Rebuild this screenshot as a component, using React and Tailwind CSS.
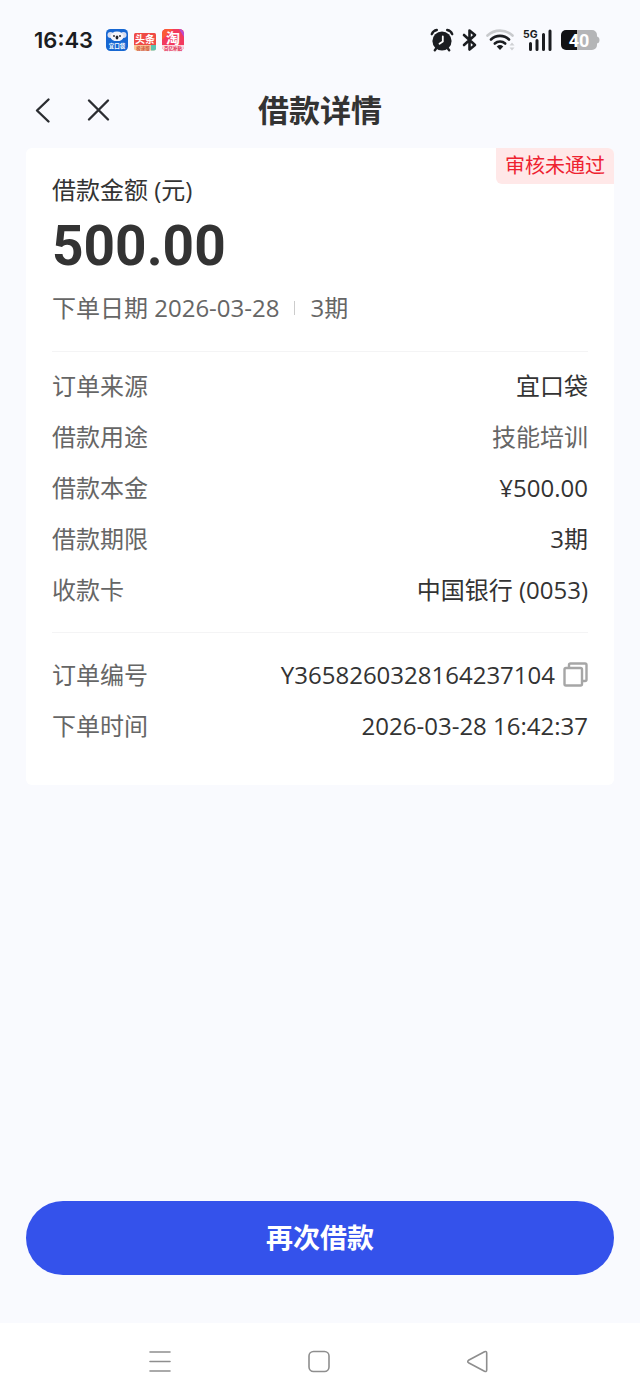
import React from 'react';

const basicRows = [
  { label: '订单来源', value: '宜口袋' },
  { label: '借款用途', value: '技能培训', muted: true },
  { label: '借款本金', value: '¥500.00' },
  { label: '借款期限', value: '3期' },
  { label: '收款卡', value: '中国银行 (0053)' }
];

const orderRows = [
  { label: '订单编号', value: 'Y3658260328164237104', copyable: true },
  { label: '下单时间', value: '2026-03-28 16:42:37' }
];

const AppBadges = () => (
  <div className="flex items-center gap-1.5" aria-hidden="true">
    {/* Yikoudai */}
    <svg width="22" height="22" viewBox="0 0 22 22">
      <rect width="22" height="22" rx="4.5" fill="#1767d2" />
      <circle cx="4.5" cy="6" r="3" fill="#d9def0" />
      <circle cx="17.5" cy="6" r="3" fill="#d9def0" />
      <ellipse cx="11" cy="7.5" rx="6.5" ry="5" fill="#f4f5fb" />
      <ellipse cx="11" cy="8.5" rx="1.4" ry="2" fill="#20232b" />
      <circle cx="8" cy="7" r="0.9" fill="#20232b" />
      <circle cx="14" cy="7" r="0.9" fill="#20232b" />
      <path d="M3 12h16v8H3z" fill="#1767d2" />
      <text x="11" y="18.5" textAnchor="middle" fontSize="5.5" fontWeight="700" fill="#fff">宜口袋</text>
    </svg>
    {/* Toutiao */}
    <svg width="22" height="22" viewBox="0 0 22 22">
      <rect y="4" width="22" height="13" rx="1.5" fill="#ef4a45" />
      <path d="M0 16h22v3.5a2 2 0 0 1-2 2H2a2 2 0 0 1-2-2z" fill="#f9c69a" />
      <path d="M17 16h5v3.5a2 2 0 0 1-2 2h-3z" fill="#5cc3b0" />
      <text x="11" y="14" textAnchor="middle" fontSize="10" fontWeight="700" fill="#fff">头条</text>
      <text x="9" y="20.5" textAnchor="middle" fontSize="4.5" fontWeight="700" fill="#d0583a">极速版</text>
    </svg>
    {/* Taobao */}
    <svg width="22" height="22" viewBox="0 0 22 22" overflow="visible">
      <rect width="22" height="22" rx="4.5" fill="#f23a5e" />
      <path d="M0 11V4.5A4.5 4.5 0 0 1 4.5 0H11z" fill="#fb5a36" />
      <path d="M17 0a5 5 0 0 1 5 5v3z" fill="#b84bd0" />
      <path d="M0 16h22v1.5a4.5 4.5 0 0 1-4.5 4.5h-13A4.5 4.5 0 0 1 0 17.5z" fill="#fbd9e0" />
      <text x="11" y="14" textAnchor="middle" fontSize="14" fontWeight="700" fill="#fff">淘</text>
      <text x="11" y="20.5" textAnchor="middle" fontSize="4.5" fontWeight="700" fill="#e02850">百亿补贴</text>
    </svg>
  </div>
);

const AlarmIcon = () => (
  <svg width="24" height="24" viewBox="0 0 24 24" aria-hidden="true">
    <circle cx="12" cy="13" r="9.6" fill="#1b1d21" />
    <path d="M1.8 6.2A6.5 6.5 0 0 1 6.8 2M17.2 2a6.5 6.5 0 0 1 5 4.2" fill="none" stroke="#1b1d21" strokeWidth="2.4" strokeLinecap="round" />
    <path d="M6.5 20l-1.7 2.2M17.5 20l1.7 2.2" stroke="#1b1d21" strokeWidth="2.4" strokeLinecap="round" />
    <path d="M12.8 8.5v5l-3.3 2.3" fill="none" stroke="#fff" strokeWidth="1.8" strokeLinecap="round" />
  </svg>
);

const BluetoothIcon = () => (
  <svg width="16" height="24" viewBox="0 0 16 24" aria-hidden="true">
    <path d="M2 7l11 10-5.500 4.500v-19L13 7 2 17" fill="none" stroke="#1b1d21" strokeWidth="2.6" strokeLinejoin="round" strokeLinecap="round" />
  </svg>
);

const WifiIcon = () => (
  <svg width="29" height="24" viewBox="0 0 29 24" aria-hidden="true">
    <g fill="none" strokeWidth="2.6" strokeLinecap="round">
      <path d="M1.5 7.5a18.5 18.5 0 0 1 25 0" stroke="#c8cacd" />
      <path d="M5 11.5a13 13 0 0 1 18 0" stroke="#1b1d21" />
      <path d="M8.8 15.5a7.6 7.6 0 0 1 10.4 0" stroke="#1b1d21" />
    </g>
    <path d="M14 22l-3.300-3.500a5 5 0 0 1 6.600 0z" fill="#1b1d21" />
    <path d="M23.5 17.5l2.5-3 2.5 3zM23.5 19.5l2.5 3 2.5-3z" fill="#cfd1d4" />
  </svg>
);

const SignalIcon = () => (
  <svg width="30" height="24" viewBox="0 0 30 24" aria-hidden="true">
    <text x="0" y="9.5" fontFamily="Inter, sans-serif" fontSize="10.5" fontWeight="700" fill="#1b1d21">5G</text>
    <path d="M7.5 21.5v-6M14 21.5v-9M20.5 21.5v-15M27 21.5V3" stroke="#1b1d21" strokeWidth="3" strokeLinecap="round" />
  </svg>
);

const BatteryIcon = () => (
  <svg width="39" height="22" viewBox="0 0 39 22" role="img" aria-label="40%">
    <path d="M5 1h11v20H5a5 5 0 0 1-5-5V6a5 5 0 0 1 5-5z" fill="#111214" />
    <path d="M16 1h15a5 5 0 0 1 5 5v1.5q2.5.5 2.5 3.5T36 14.5V16a5 5 0 0 1-5 5H16z" fill="#b4b5b7" />
    <text x="18" y="17.5" textAnchor="middle" fontFamily="Roboto, sans-serif" fontSize="18" fontWeight="700" fill="#fff">40</text>
  </svg>
);

const StatusBar = () => (
  <div className="flex h-20 items-center justify-between pl-[34px] pr-10">
    <div className="flex items-center gap-[13px]">
      <span className="font-[Inter] text-[22px] font-semibold text-[#1b1d21]">16:43</span>
      <AppBadges />
    </div>
    <div className="flex items-center gap-2">
      <AlarmIcon />
      <BluetoothIcon />
      <WifiIcon />
      <SignalIcon />
      <BatteryIcon />
    </div>
  </div>
);

const TitleBar = () => (
  <header className="grid h-[60px] grid-cols-[1fr_auto_1fr] items-center px-[30px]">
    <div className="flex items-center gap-7">
      <button type="button" aria-label="返回">
        <svg width="26" height="28" viewBox="0 0 26 28" fill="none" stroke="#2b2d31" strokeWidth="2.4" strokeLinecap="round" strokeLinejoin="round">
          <path d="M18.5 3.5L7 14.5l11.5 11" />
        </svg>
      </button>
      <button type="button" aria-label="关闭">
        <svg width="28" height="28" viewBox="0 0 28 28" fill="none" stroke="#2b2d31" strokeWidth="2.4" strokeLinecap="round">
          <path d="M5 4.5l19 19M24 4.5l-19 19" />
        </svg>
      </button>
    </div>
    <h1 className="text-[31px] font-bold text-[#333]">借款详情</h1>
  </header>
);

const CopyIcon = () => (
  <svg width="25" height="25" viewBox="0 0 25 25" fill="none" stroke="#a6a6a6" strokeWidth="2.4" strokeLinejoin="round">
    <rect x="1.5" y="6" width="17.5" height="17.5" rx="1.5" />
    <path d="M6 5.5V3a1.5 1.5 0 0 1 1.5-1.5H22A1.5 1.5 0 0 1 23.500 3v14.500A1.500 1.500 0 0 1 22 19h-2.500" />
  </svg>
);

const DetailRow = ({ label, value, muted, copyable }) => (
  <div className="flex h-[51px] items-center justify-between">
    <dt className="text-[#666]">{label}</dt>
    <dd className={`flex items-center gap-2 ${muted ? 'text-[#666]' : 'text-[#333]'}`}>
      {value}
      {copyable && (
        <button type="button" aria-label="复制订单编号">
          <CopyIcon />
        </button>
      )}
    </dd>
  </div>
);

const LoanCard = () => (
  <section className="relative mx-[26px] mt-2 rounded-md bg-white px-[26px] pt-6 pb-[34px] text-2xl">
    <span className="absolute top-0 right-0 rounded-tr-md rounded-bl-md bg-[#ffe8e8] px-[9px] text-xl leading-9 text-[#ee2230]">
      审核未通过
    </span>

    <p className="leading-9 text-[#333]">借款金额 (元)</p>
    <p className="mt-0.5 font-[Roboto,sans-serif] text-[55px] leading-[72px] font-bold text-[#333]">
      500.00
    </p>
    <p className="mt-2 flex items-center pb-[25px] leading-9 text-[#666]">
      <span>下单日期 2026-03-28</span>
      <span className="mx-[15px] h-3.5 w-px bg-[#ccc]"></span>
      <span>3期</span>
    </p>

    <dl className="border-t border-[#f4f4f5] pt-2 pb-[17px]">
      {basicRows.map((row) => (
        <DetailRow key={row.label} {...row} />
      ))}
    </dl>
    <dl className="border-t border-[#f4f4f5] pt-4">
      {orderRows.map((row) => (
        <DetailRow key={row.label} {...row} />
      ))}
    </dl>
  </section>
);

const SystemNav = () => (
  <nav className="grid h-[77px] grid-cols-[1fr_auto_1fr] items-center gap-[135px] bg-white">
    <button type="button" className="justify-self-end" aria-label="最近任务">
      <svg width="24" height="24" viewBox="0 0 24 24" stroke="#8e8e8e" strokeWidth="1.6" strokeLinecap="round">
        <path d="M1 2h20M1 11.5h20M1 21h20" />
      </svg>
    </button>
    <button type="button" aria-label="主页">
      <svg width="24" height="24" viewBox="0 0 24 24" fill="none" stroke="#8e8e8e" strokeWidth="1.6">
        <rect x="1" y="1.5" width="20" height="20" rx="4.5" />
      </svg>
    </button>
    <button type="button" className="justify-self-start" aria-label="返回上一级">
      <svg width="24" height="24" viewBox="0 0 24 24" fill="none" stroke="#8e8e8e" strokeWidth="1.6" strokeLinejoin="round">
        <path d="M1.500 10.300L17.500 1.800q2.200-1 2.200 1.200v17q0 2.200-2.200 1.200L1.500 12.700q-1.500-1.200 0-2.400z" />
      </svg>
    </button>
  </nav>
);

export default function App() {
  return (
    <div className="flex min-h-screen flex-col bg-[#f9fafe] font-['Open_Sans','Noto_Sans_CJK_SC',sans-serif]">
      <StatusBar />
      <TitleBar />
      <main className="flex flex-1 flex-col justify-between">
        <LoanCard />
        <div className="px-[26px] pt-12 pb-12">
          <button type="button" className="h-[74px] w-full rounded-full bg-[#3452eb] text-[27px] font-bold text-white">
            再次借款
          </button>
        </div>
      </main>
      <SystemNav />
    </div>
  );
}
